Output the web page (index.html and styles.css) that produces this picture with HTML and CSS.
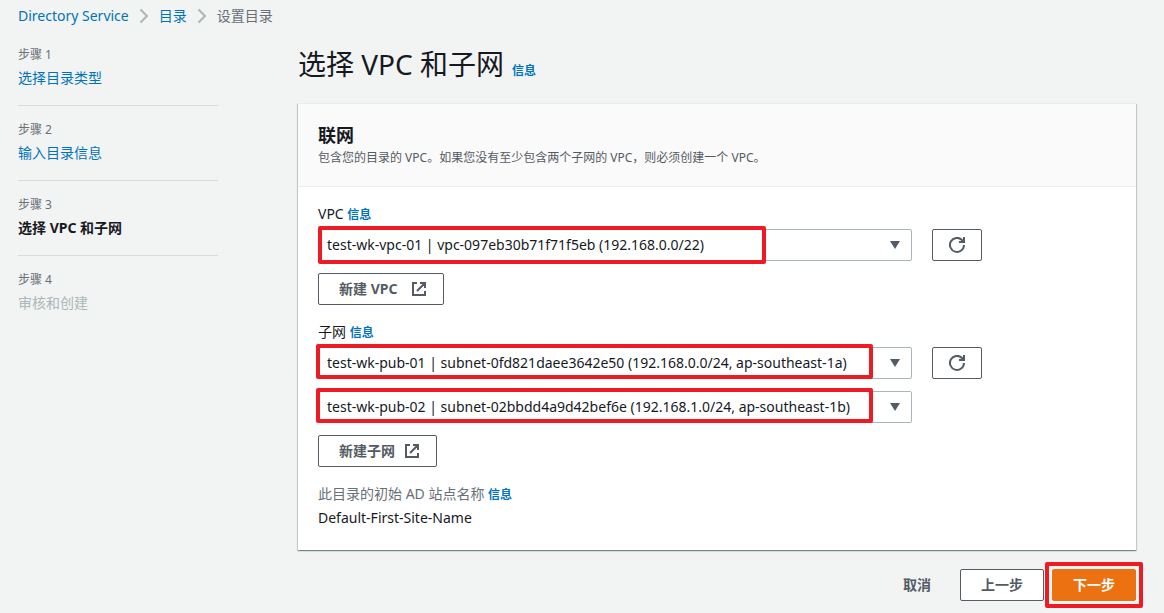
FILE: index.html
```html
<!DOCTYPE html>
<html lang="zh-CN">
<head>
<meta charset="utf-8">
<meta name="viewport" content="width=device-width, initial-scale=1">
<title>设置目录</title>
<link rel="stylesheet" href="styles.css">
</head>
<body>
<svg class="sprite" aria-hidden="true">
  <symbol id="chevron" viewBox="0 0 10 16"><path d="M1.5 1.5 L8 8 L1.5 14.500" fill="none" stroke="currentColor" stroke-width="2"/></symbol>
  <symbol id="external" viewBox="0 0 16 16"><path d="M6 2H2v12h12v-4M9 2h5v5M14 2L6 10" fill="none" stroke="currentColor" stroke-width="2"/></symbol>
  <symbol id="refresh" viewBox="0 0 16 16"><path d="M15 8a7 7 0 1 1-2-5l1 1.500M15 0v5h-5" fill="none" stroke="currentColor" stroke-width="2"/></symbol>
</svg>
<nav class="breadcrumb" aria-label="导航路径">
  <a href="#">Directory Service</a>
  <svg class="chevron"><use href="#chevron"/></svg>
  <a href="#">目录</a>
  <svg class="chevron"><use href="#chevron"/></svg>
  <span class="crumb-current">设置目录</span>
</nav>
<div class="layout">
  <ol class="steps">
    <li class="step"><span class="step-number">步骤 1</span><a href="#">选择目录类型</a></li>
    <li class="step"><span class="step-number">步骤 2</span><a href="#">输入目录信息</a></li>
    <li class="step"><span class="step-number">步骤 3</span><span class="step-active">选择 VPC 和子网</span></li>
    <li class="step"><span class="step-number">步骤 4</span><span class="step-disabled">审核和创建</span></li>
  </ol>
  <main class="main">
    <header class="page-header">
      <h1>选择 VPC 和子网</h1>
      <a class="info" href="#">信息</a>
    </header>
    <form class="form">
      <section class="card">
        <header class="card-header">
          <h2>联网</h2>
          <p>包含您的目录的 VPC。如果您没有至少包含两个子网的 VPC，则必须创建一个 VPC。</p>
        </header>
        <div class="card-body">
          <div class="field">
            <div class="field-label"><label for="vpc">VPC</label> <a class="info" href="#">信息</a></div>
            <div class="row">
              <div class="select">
                <select id="vpc"><option>test-wk-vpc-01 | vpc-097eb30b71f71f5eb (192.168.0.0/22)</option></select>
                <span class="mark mark-vpc"></span>
              </div>
              <button class="button refresh" type="button" aria-label="刷新 VPC"><svg class="refresh-icon"><use href="#refresh"/></svg></button>
            </div>
            <button class="button" type="button">新建 VPC <svg class="icon"><use href="#external"/></svg></button>
          </div>
          <div class="field">
            <div class="field-label"><label for="subnet-1">子网</label> <a class="info" href="#">信息</a></div>
            <div class="row">
              <div class="select">
                <select id="subnet-1"><option>test-wk-pub-01 | subnet-0fd821daee3642e50 (192.168.0.0/24, ap-southeast-1a)</option></select>
                <span class="mark mark-subnet"></span>
              </div>
              <button class="button refresh" type="button" aria-label="刷新子网"><svg class="refresh-icon"><use href="#refresh"/></svg></button>
            </div>
            <div class="row">
              <div class="select">
                <select id="subnet-2" aria-label="子网 2"><option>test-wk-pub-02 | subnet-02bbdd4a9d42bef6e (192.168.1.0/24, ap-southeast-1b)</option></select>
                <span class="mark mark-subnet"></span>
              </div>
            </div>
            <button class="button tight" type="button">新建子网 <svg class="icon"><use href="#external"/></svg></button>
          </div>
          <div class="site">
            <div class="site-label">此目录的初始 AD 站点名称 <a class="info" href="#">信息</a></div>
            <div class="site-value">Default-First-Site-Name</div>
          </div>
        </div>
      </section>
      <div class="actions">
        <button class="button link" type="button">取消</button>
        <button class="button" type="button">上一步</button>
        <div class="next">
          <button class="button primary" type="submit">下一步</button>
          <span class="mark mark-next"></span>
        </div>
      </div>
    </form>
  </main>
</div>
</body>
</html>
```
FILE: styles.css
```css
* { box-sizing: border-box; }
body {
  margin: 0;
  background: #f2f3f3;
  color: #16191f;
  font: 14px/22px "Noto Sans", "Noto Sans CJK SC", sans-serif;
}
a { color: #0073bb; text-decoration: none; }
h1, h2, p, ol { margin: 0; padding: 0; }
.sprite { position: absolute; width: 0; height: 0; }
.breadcrumb { display: flex; align-items: center; gap: 10px; padding: 5px 18px; }
.chevron { width: 10px; height: 16px; color: #aab7b8; }
.crumb-current { color: #687078; }
.layout { display: flex; gap: 80px; padding: 0 28px 0 18px; }
.steps { flex: 0 0 200px; list-style: none; padding-top: 13px; }
.step { display: flex; flex-direction: column; height: 75px; }
.step:not(:last-child)::after { content: ""; border-top: 1px solid #d5dbdb; margin-top: 14px; }
.step-number { color: #687078; font-size: 12px; line-height: 20px; }
.step > :nth-child(2) { line-height: 26px; }
.step-active { font-weight: 700; }
.step-disabled { color: #aab7b8; }
.main { flex: 1; min-width: 0; }
.page-header { display: flex; align-items: baseline; gap: 8px; padding: 14px 0 21px; }
h1 { font-size: 28px; font-weight: 400; line-height: 36px; }
.info { font-size: 12px; font-weight: 700; }
.card {
  background: #fff;
  border-top: 1px solid #eaeded;
  box-shadow: 0 1px 1px rgba(0, 28, 36, 0.3), 1px 1px 1px rgba(0, 28, 36, 0.15), -1px 1px 1px rgba(0, 28, 36, 0.15);
}
.card-header { background: #fafafa; border-bottom: 1px solid #eaeded; padding: 19px 20px 17px; }
h2 { font-size: 18px; line-height: 24px; }
.card-header p { color: #545b64; font-size: 12px; line-height: 22px; }
.card-body { display: flex; flex-direction: column; gap: 16px; padding: 16px 20px 20px; }
.field { display: flex; flex-direction: column; align-items: flex-start; gap: 12px; }
.field-label { line-height: 22px; margin-bottom: -9px; }
.row { display: grid; grid-template-columns: repeat(12, minmax(0, 1fr)); gap: 20px; width: 100%; }
.select { position: relative; grid-column: span 9; height: 32px; }
select {
  appearance: none;
  width: 100%;
  height: 32px;
  padding: 0 32px 0 8px;
  border: 1px solid #aab7b8;
  border-radius: 2px;
  background: #fff;
  color: inherit;
  font: inherit;
}
.select::after {
  content: "";
  position: absolute;
  top: 12px;
  right: 12px;
  border: 5px solid transparent;
  border-top: 8px solid #545b64;
  border-bottom: 0;
  pointer-events: none;
}
.button {
  display: inline-flex;
  align-items: center;
  justify-content: center;
  height: 32px;
  padding: 0 20px;
  border: 1px solid #545b64;
  border-radius: 2px;
  background: #fff;
  color: #545b64;
  font: inherit;
  font-weight: 700;
  white-space: nowrap;
}
.icon { width: 16px; height: 16px; margin-left: 14px; margin-right: -4px; }
.tight .icon { margin-left: 9px; }
.refresh { width: 50px; padding: 0; }
.refresh-icon { width: 16px; height: 16px; }
.mark { position: absolute; border: 4px solid #ed1c24; border-radius: 2px; pointer-events: none; z-index: 1; }
.mark-vpc { top: -3px; bottom: -3px; left: 0; width: 448px; }
.mark-subnet { top: -3px; bottom: 0; left: -2px; width: 557px; }
.site-label { color: #687078; }
.site-value { line-height: 24px; }
.actions { display: flex; justify-content: flex-end; gap: 8px; padding: 19px 0 12px; }
.link { background: transparent; border-color: transparent; }
.next { position: relative; }
.primary { background: #ec7211; border-color: #ec7211; color: #fff; }
.mark-next { inset: -7px; }
```
